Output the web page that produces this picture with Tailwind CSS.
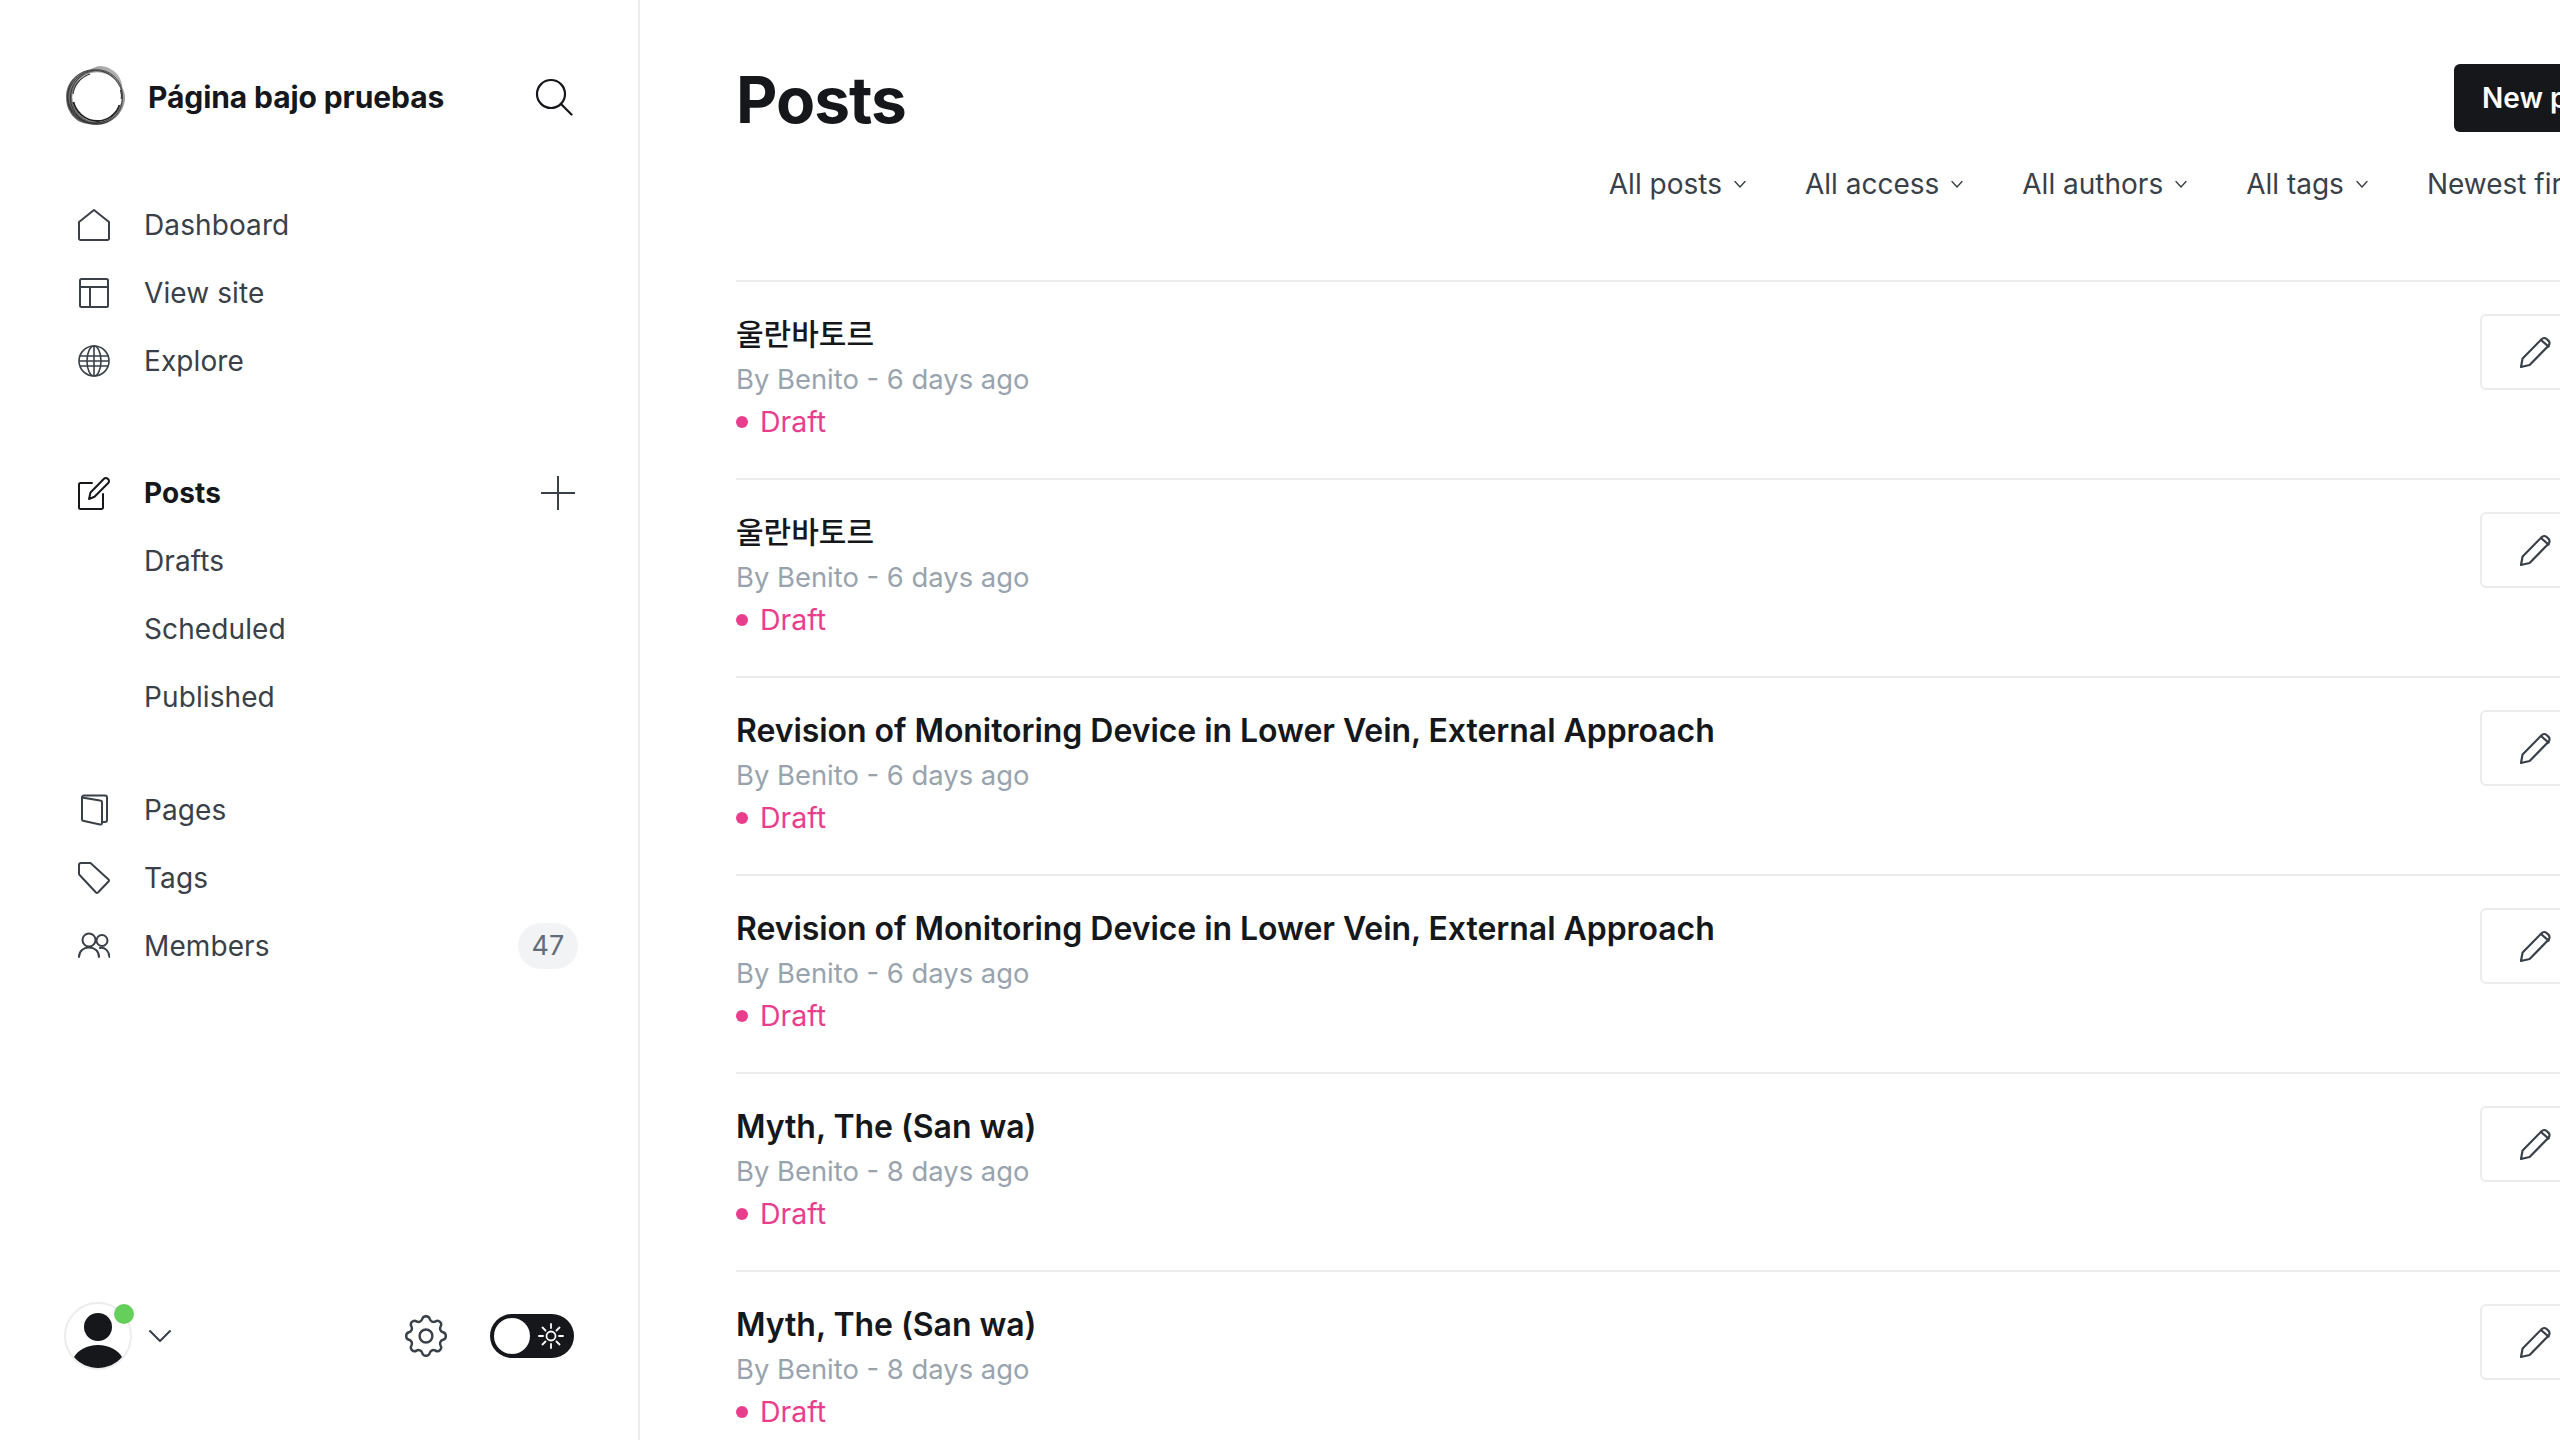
<!DOCTYPE html>
<html lang="en">

<head>
  <meta charset="UTF-8" />
  <title>Posts</title>
  <script src="https://cdn.jsdelivr.net/npm/@tailwindcss/browser@4"></script>
</head>

<body class="h-screen overflow-hidden bg-white font-['Inter','Noto_Sans_CJK_KR',sans-serif] text-[#15171a]">
  <svg class="hidden">
    <symbol id="pencil" viewBox="0 0 36 36" fill="none" stroke="currentColor" stroke-width="2.2" stroke-linejoin="round" stroke-linecap="round">
      <path d="M3 33l1.6-8.6L23.6 5.2a3.6 3.6 0 0 1 5-.2l1.8 1.6a3.6 3.6 0 0 1 .1 5.1L11.6 31 3 33z" />
      <path d="M23 6l7.6 6.6" />
    </symbol>
    <symbol id="chev" viewBox="0 0 14 14" fill="none" stroke="currentColor" stroke-width="1.4" stroke-linecap="round" stroke-linejoin="round">
      <path d="M2 4.5l5 5.5 5-5.5" />
    </symbol>
  </svg>

  <div class="flex h-full w-[2560px]">
    <!-- Sidebar -->
    <aside class="flex h-full w-[640px] shrink-0 flex-col border-r-2 border-[#ececec] pt-[64px]">
      <div class="flex h-[66px] items-center pl-[64px] pr-[65px]">
        <svg class="h-[62px] w-[62px] shrink-0" viewBox="0 0 62 62" fill="none">
          <defs>
            <linearGradient id="ring" x1="0" y1="1" x2="1" y2="0">
              <stop offset="0" stop-color="#555" />
              <stop offset="0.55" stop-color="#8a8a8a" />
              <stop offset="1" stop-color="#c4c4c4" />
            </linearGradient>
          </defs>
          <path d="M36 0c7 0 14 4 18 9 3 4 4 9 4.500 13 2 4 3 8 2.500 12-1 6-3 10-6 14-4 5-10 9-17 10.500-4 .7-9 .7-14-.5C16 57 10 53 6.500 47 3 42 2 36 2 30c0-6 2-11 5-15 4-5 10-9 17-11 4-1 8-4 12-4z" fill="url(#ring)" />
          <g stroke="#1f1f1f" stroke-width="0.9" opacity="0.7">
            <ellipse cx="31" cy="30.500" rx="28" ry="26" transform="rotate(-35 31 30.500)" />
            <ellipse cx="31" cy="31" rx="28" ry="26.500" transform="rotate(40 31 31)" />
            <ellipse cx="32" cy="31" rx="26.500" ry="25.500" transform="rotate(-70 32 31)" />
          </g>
          <circle cx="33" cy="31" r="24.800" fill="#fff" />
          <path d="M9.500 36c2 9 11 19 24 19 10 0 19-7 22-16" stroke="#222" stroke-width="1.800" />
          <path d="M9 28c1-9 8-17 17-20M56.500 24c1 3 1.200 6 .8 9" stroke="#333" stroke-width="1.200" />
        </svg>
        <span class="ml-[22px] text-[30px] font-bold tracking-[-0.1px]">Página bajo pruebas</span>
        <svg class="ml-auto h-[38px] w-[38px]" viewBox="0 0 38 38" fill="none" stroke="#15171a" stroke-width="2.2" stroke-linecap="round">
          <circle cx="16" cy="16" r="14" />
          <path d="M26 26l10.5 10.5" />
        </svg>
      </div>

      <nav class="mt-[61px] pl-[78px] pr-[62px] text-[28px] tracking-[0.1px] text-[#394047]">
        <a class="flex h-[68px] items-center gap-[34px]">
          <svg class="h-[32px] w-[32px] shrink-0" viewBox="0 0 32 32" fill="none" stroke="currentColor" stroke-width="2" stroke-linejoin="round">
            <path d="M1 13L16 1l15 12v16.5a1.5 1.5 0 0 1-1.5 1.5h-27A1.5 1.5 0 0 1 1 29.5V13z" />
          </svg>
          Dashboard
        </a>
        <a class="flex h-[68px] items-center gap-[34px]">
          <svg class="h-[32px] w-[32px] shrink-0" viewBox="0 0 32 32" fill="none" stroke="currentColor" stroke-width="2" stroke-linejoin="round">
            <rect x="2" y="2" width="28" height="28" rx="1.5" />
            <path d="M2 10h28M12 10v20" />
          </svg>
          View site
        </a>
        <a class="flex h-[68px] items-center gap-[34px]">
          <svg class="h-[32px] w-[32px] shrink-0" viewBox="0 0 32 32" fill="none" stroke="currentColor" stroke-width="1.6">
            <circle cx="16" cy="16" r="15" />
            <ellipse cx="16" cy="16" rx="7" ry="15" />
            <path d="M2 11h28M1 16h30M2 21h28M16 1v30" />
          </svg>
          Explore
        </a>

        <div class="mt-[64px] flex h-[68px] items-center gap-[34px]">
          <svg class="h-[34px] w-[32px] shrink-0" viewBox="0 0 32 34" fill="none" stroke="#15171a" stroke-width="2" stroke-linejoin="round" stroke-linecap="round">
            <path d="M14 7H2.5A1.5 1.5 0 0 0 1 8.5v23A1.5 1.5 0 0 0 2.5 33h21a1.5 1.5 0 0 0 1.500-1.500V18" />
            <path d="M11 23l1.500-6.500L26 2.800a2.600 2.600 0 0 1 3.700 0l.500.500a2.600 2.600 0 0 1 0 3.700L16.500 20.800 11 23z" />
          </svg>
          <span class="font-bold text-[#15171a]">Posts</span>
          <svg class="ml-auto mr-[1px] h-[34px] w-[34px]" viewBox="0 0 34 34" fill="none" stroke="#394047" stroke-width="2" stroke-linecap="round">
            <path d="M17 0v34M0 17h34" />
          </svg>
        </div>
        <a class="flex h-[68px] items-center pl-[66px]">Drafts</a>
        <a class="flex h-[68px] items-center pl-[66px]">Scheduled</a>
        <a class="flex h-[68px] items-center pl-[66px]">Published</a>

        <a class="mt-[45px] flex h-[68px] items-center gap-[34px]">
          <svg class="h-[32px] w-[32px] shrink-0" viewBox="0 0 32 32" fill="none" stroke="currentColor" stroke-width="2" stroke-linejoin="round">
            <path d="M4 3.500A2 2 0 0 1 6 1.500h21a2 2 0 0 1 2 2V26a2 2 0 0 1-2 2h-3" />
            <path d="M4 3.500l18 3a2 2 0 0 1 2 2V29a1.500 1.500 0 0 1-2 1.500L6 27a2 2 0 0 1-2-2V3.500z" />
          </svg>
          Pages
        </a>
        <a class="flex h-[68px] items-center gap-[34px]">
          <svg class="h-[32px] w-[32px] shrink-0" viewBox="0 0 32 32" fill="none" stroke="currentColor" stroke-width="2" stroke-linejoin="round">
            <path d="M1 3a2 2 0 0 1 2-2h9.500l18 16.500a1.500 1.500 0 0 1 0 2L20 30.500a1.500 1.500 0 0 1-2 0L1.600 13A2 2 0 0 1 1 11.500V3z" />
          </svg>
          Tags
        </a>
        <a class="flex h-[68px] items-center gap-[34px]">
          <svg class="h-[32px] w-[32px] shrink-0" viewBox="0 0 32 32" fill="none" stroke="currentColor" stroke-width="2" stroke-linecap="round">
            <circle cx="11" cy="10" r="6.500" />
            <circle cx="24" cy="10.500" r="5.500" />
            <path d="M1 27c0-6 4.500-9.500 10-9.500S21 21 21 27" />
            <path d="M22 18c5-1 9 3 9.500 9" />
          </svg>
          Members
          <span class="ml-auto mr-[-2px] flex h-[46px] w-[60px] items-center justify-center rounded-full bg-[#f1f3f4] text-[27px] text-[#626d79]">47</span>
        </a>
      </nav>

      <div class="mt-auto mb-[70px] flex items-center pl-[64px] pr-[64px]">
        <div class="relative h-[68px] w-[68px] shrink-0 overflow-visible">
          <svg class="h-full w-full" viewBox="0 0 68 68">
            <circle cx="34" cy="34" r="33" fill="#fff" stroke="#ececec" stroke-width="2" />
            <circle cx="34" cy="25" r="14" fill="#15171a" />
            <path d="M10 55c4-7 13-12 24-12s20 5 24 12c-6 7-15 11-24 11s-18-4-24-11z" fill="#15171a" />
          </svg>
          <span class="absolute right-[-2px] top-[2px] h-[20px] w-[20px] rounded-full bg-[#65cf5b]"></span>
        </div>
        <svg class="ml-[16px] h-[16px] w-[24px]" viewBox="0 0 24 16" fill="none" stroke="#394047" stroke-width="2" stroke-linecap="round" stroke-linejoin="round">
          <path d="M2 3l10 10L22 3" />
        </svg>
        <svg class="ml-auto h-[42px] w-[42px]" viewBox="2.500 1 19 19" fill="none" stroke="#394047" stroke-width="1.100" stroke-linejoin="round">
          <path d="M10.300 2.800c.5-1.700 2.900-1.700 3.400 0a1.800 1.800 0 0 0 2.600 1.100c1.500-.9 3.200.8 2.300 2.300a1.800 1.800 0 0 0 1.100 2.600c1.700.5 1.700 2.900 0 3.400a1.800 1.800 0 0 0-1.100 2.600c.9 1.500-.8 3.200-2.300 2.300a1.800 1.800 0 0 0-2.600 1.100c-.5 1.700-2.900 1.700-3.400 0a1.800 1.800 0 0 0-2.600-1.100c-1.500.9-3.200-.8-2.300-2.300a1.800 1.800 0 0 0-1.100-2.600c-1.700-.5-1.700-2.900 0-3.400a1.800 1.800 0 0 0 1.100-2.600c-.9-1.500.8-3.200 2.300-2.300a1.800 1.800 0 0 0 2.600-1.100z" />
          <circle cx="12" cy="10.500" r="2.900" />
        </svg>
        <div class="ml-[43px] flex h-[44px] w-[84px] items-center justify-between rounded-full bg-[#15171a] pl-[4px] pr-[10px]">
          <span class="h-[36px] w-[36px] rounded-full bg-white"></span>
          <svg class="h-[26px] w-[26px]" viewBox="0 0 26 26" fill="none" stroke="#fff" stroke-width="1.8" stroke-linecap="round">
            <circle cx="13" cy="13" r="4.500" />
            <path d="M13 1v4M13 21v4M1 13h4M21 13h4M4.500 4.500l3 3M18.500 18.500l3 3M21.500 4.500l-3 3M7.500 18.500l-3 3" />
          </svg>
        </div>
      </div>
    </aside>

    <!-- Main -->
    <main class="min-w-0 flex-1 overflow-hidden pl-[96px]">
      <div class="w-[1888px]">
        <div class="flex h-[132px] items-end justify-between">
          <h1 class="mb-[-6px] text-[64px] leading-[76px] font-bold tracking-[-1px]">Posts</h1>
          <button class="flex h-[68px] w-[170px] items-center rounded-[6px] bg-[#15171a] pl-[28px] text-[28px] font-semibold text-white">New post</button>
        </div>

        <div class="flex h-[148px] items-start justify-end pt-[32px] pr-[13px] text-[28px] leading-[40px] text-[#394047]">
          <div class="flex gap-[58px]">
            <span class="flex items-center gap-[11px]">All posts<svg class="h-[14px] w-[14px]"><use href="#chev" /></svg></span>
            <span class="flex items-center gap-[11px]">All access<svg class="h-[14px] w-[14px]"><use href="#chev" /></svg></span>
            <span class="flex items-center gap-[11px]">All authors<svg class="h-[14px] w-[14px]"><use href="#chev" /></svg></span>
            <span class="flex items-center gap-[11px]">All tags<svg class="h-[14px] w-[14px]"><use href="#chev" /></svg></span>
            <span class="flex items-center gap-[11px]">Newest first<svg class="h-[14px] w-[14px]"><use href="#chev" /></svg></span>
          </div>
        </div>

        <ul class="border-t-2 border-[#ececec]">
          <li class="flex h-[198px] justify-between border-b-2 border-[#ececec] pt-[32px]">
            <div>
              <h3 class="mb-[4px] text-[30px] leading-[40px] font-medium">울란바토르</h3>
              <p class="mt-[2px] text-[27.4px] leading-[42px] text-[#99a3ad]">By Benito - 6 days ago</p>
              <p class="mt-[1px] flex items-center gap-[12px] text-[28.5px] leading-[42px] text-[#e93e8c]"><span class="h-[12px] w-[12px] rounded-full bg-[#e93e8c]"></span>Draft</p>
            </div>
            <a class="mr-[34px] flex h-[76px] w-[110px] items-center justify-center rounded-[6px] border-2 border-[#ececec] pl-[2px] text-[#394047]"><svg class="h-[36px] w-[36px]"><use href="#pencil" /></svg></a>
          </li>
          <li class="flex h-[198px] justify-between border-b-2 border-[#ececec] pt-[32px]">
            <div>
              <h3 class="mb-[4px] text-[30px] leading-[40px] font-medium">울란바토르</h3>
              <p class="mt-[2px] text-[27.4px] leading-[42px] text-[#99a3ad]">By Benito - 6 days ago</p>
              <p class="mt-[1px] flex items-center gap-[12px] text-[28.5px] leading-[42px] text-[#e93e8c]"><span class="h-[12px] w-[12px] rounded-full bg-[#e93e8c]"></span>Draft</p>
            </div>
            <a class="mr-[34px] flex h-[76px] w-[110px] items-center justify-center rounded-[6px] border-2 border-[#ececec] pl-[2px] text-[#394047]"><svg class="h-[36px] w-[36px]"><use href="#pencil" /></svg></a>
          </li>
          <li class="flex h-[198px] justify-between border-b-2 border-[#ececec] pt-[32px]">
            <div>
              <h3 class="text-[32px] leading-[42px] font-semibold tracking-[-0.05px]">Revision of Monitoring Device in Lower Vein, External Approach</h3>
              <p class="mt-[2px] text-[27.4px] leading-[42px] text-[#99a3ad]">By Benito - 6 days ago</p>
              <p class="mt-[1px] flex items-center gap-[12px] text-[28.5px] leading-[42px] text-[#e93e8c]"><span class="h-[12px] w-[12px] rounded-full bg-[#e93e8c]"></span>Draft</p>
            </div>
            <a class="mr-[34px] flex h-[76px] w-[110px] items-center justify-center rounded-[6px] border-2 border-[#ececec] pl-[2px] text-[#394047]"><svg class="h-[36px] w-[36px]"><use href="#pencil" /></svg></a>
          </li>
          <li class="flex h-[198px] justify-between border-b-2 border-[#ececec] pt-[32px]">
            <div>
              <h3 class="text-[32px] leading-[42px] font-semibold tracking-[-0.05px]">Revision of Monitoring Device in Lower Vein, External Approach</h3>
              <p class="mt-[2px] text-[27.4px] leading-[42px] text-[#99a3ad]">By Benito - 6 days ago</p>
              <p class="mt-[1px] flex items-center gap-[12px] text-[28.5px] leading-[42px] text-[#e93e8c]"><span class="h-[12px] w-[12px] rounded-full bg-[#e93e8c]"></span>Draft</p>
            </div>
            <a class="mr-[34px] flex h-[76px] w-[110px] items-center justify-center rounded-[6px] border-2 border-[#ececec] pl-[2px] text-[#394047]"><svg class="h-[36px] w-[36px]"><use href="#pencil" /></svg></a>
          </li>
          <li class="flex h-[198px] justify-between border-b-2 border-[#ececec] pt-[32px]">
            <div>
              <h3 class="text-[32px] leading-[42px] font-semibold tracking-[-0.05px]">Myth, The (San wa)</h3>
              <p class="mt-[2px] text-[27.4px] leading-[42px] text-[#99a3ad]">By Benito - 8 days ago</p>
              <p class="mt-[1px] flex items-center gap-[12px] text-[28.5px] leading-[42px] text-[#e93e8c]"><span class="h-[12px] w-[12px] rounded-full bg-[#e93e8c]"></span>Draft</p>
            </div>
            <a class="mr-[34px] flex h-[76px] w-[110px] items-center justify-center rounded-[6px] border-2 border-[#ececec] pl-[2px] text-[#394047]"><svg class="h-[36px] w-[36px]"><use href="#pencil" /></svg></a>
          </li>
          <li class="flex h-[198px] justify-between border-b-2 border-[#ececec] pt-[32px]">
            <div>
              <h3 class="text-[32px] leading-[42px] font-semibold tracking-[-0.05px]">Myth, The (San wa)</h3>
              <p class="mt-[2px] text-[27.4px] leading-[42px] text-[#99a3ad]">By Benito - 8 days ago</p>
              <p class="mt-[1px] flex items-center gap-[12px] text-[28.5px] leading-[42px] text-[#e93e8c]"><span class="h-[12px] w-[12px] rounded-full bg-[#e93e8c]"></span>Draft</p>
            </div>
            <a class="mr-[34px] flex h-[76px] w-[110px] items-center justify-center rounded-[6px] border-2 border-[#ececec] pl-[2px] text-[#394047]"><svg class="h-[36px] w-[36px]"><use href="#pencil" /></svg></a>
          </li>
        </ul>
      </div>
    </main>
  </div>
</body>

</html>
